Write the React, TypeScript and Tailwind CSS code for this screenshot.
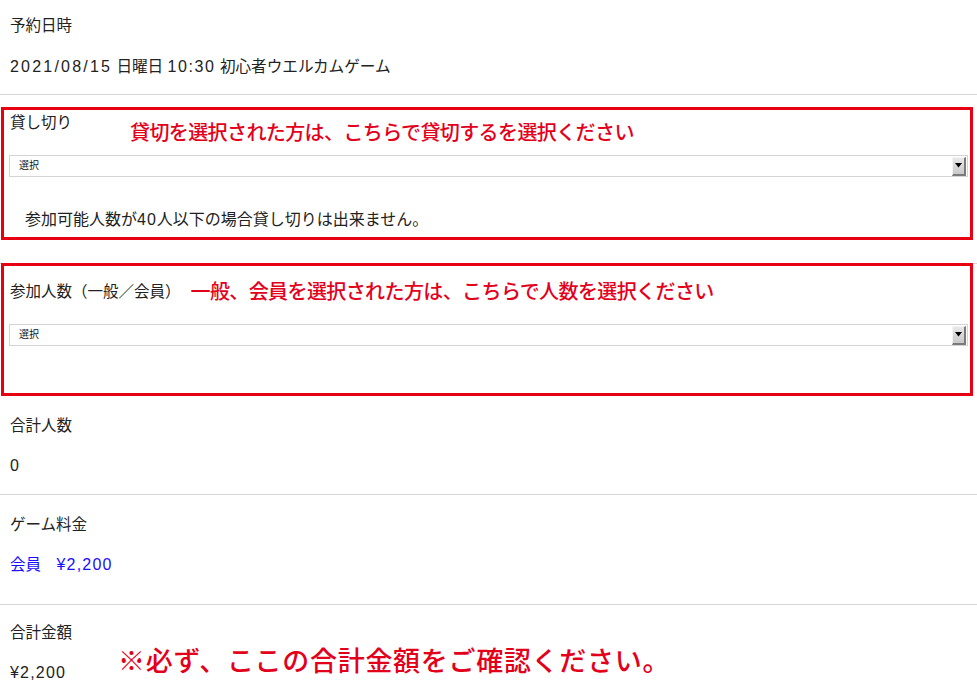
const FONT = "font-['Liberation_Sans','Noto_Sans_CJK_JP',sans-serif]";

function FakeSelect() {
  return (
    <div className="ml-[5px] w-[959px] h-[22px] border border-[#d4d4d4] bg-white flex items-center justify-between">
      <span className="pl-[9px] text-[10px] leading-[12px] text-[#111]">選択</span>
      <div className="h-[19px] w-[14px] mr-[1px] flex items-center justify-center border-t border-l border-[#f4f4f4] border-r-2 border-b-2 border-r-[#7a7a7a] border-b-[#7a7a7a] bg-gradient-to-b from-[#e8e8e8] to-[#c9c9c9]">
        <svg width="7" height="5" viewBox="0 0 7 5">
          <path d="M0 0h7L3.5 4.5z" fill="#000" />
        </svg>
      </div>
    </div>
  );
}

export default function App() {
  return (
    <div className={`${FONT} w-[977px] h-[699px] overflow-hidden bg-white text-[#222]`}>
      {/* 予約日時 */}
      <section className="pt-[16px] pb-[16px] border-b border-[#d6d6d6] pl-[10px]">
        <div className="h-[20px] leading-[20px] text-[15.5px]">予約日時</div>
        <div className="mt-[20px] h-[22px] leading-[22px] text-[15.6px]">
          <span className="text-[16px] tracking-[2.2px]">2021/08/15</span> 日曜日{" "}
          <span className="text-[16px] tracking-[1.6px]">10:30</span> 初心者ウエルカムゲーム
        </div>
      </section>

      {/* 貸し切り */}
      <section className="mt-[12px] ml-[1px] w-[972px] h-[133px] border-[3px] border-[#e60012]">
        <div className="flex items-start pl-[6px]">
          <div className="w-[120px] pt-[3px] h-[23px] leading-[20px] text-[15.5px]">貸し切り</div>
          <div className="mt-[9px] h-[28px] leading-[28px] text-[20px] font-medium text-[#e3001b] tracking-[-0.6px]">
            貸切を選択された方は、こちらで貸切するを選択ください
          </div>
        </div>
        <div className="mt-[8px]">
          <FakeSelect />
        </div>
        <div className="mt-[32px] pl-[21px] h-[22px] leading-[22px] text-[16px]">
          参加可能人数が<span className="tracking-[1px]">40</span>人以下の場合貸し切りは出来ません。
        </div>
      </section>

      {/* 参加人数 */}
      <div className="mt-[23px] border-t border-[#d6d6d6]" />
      <section className="-mt-[1px] ml-[1px] w-[972px] h-[133px] border-[3px] border-[#e60012]">
        <div className="pt-[12px] pl-[6px] flex items-center h-[40px]">
          <span className="leading-[20px] text-[15.5px]">参加人数（一般／会員）</span>
          <span className="ml-[10px] leading-[28px] text-[20px] font-medium text-[#e3001b] tracking-[-0.6px]">
            一般、会員を選択された方は、こちらで人数を選択ください
          </span>
        </div>
        <div className="mt-[18px]">
          <FakeSelect />
        </div>
      </section>

      {/* 合計人数 */}
      <section className="pt-[20px] pb-[17px] border-b border-[#d6d6d6] pl-[10px]">
        <div className="h-[20px] leading-[20px] text-[15.5px]">合計人数</div>
        <div className="mt-[19px] h-[22px] leading-[22px] text-[16px]">0</div>
      </section>

      {/* ゲーム料金 */}
      <section className="pt-[20px] pb-[28px] border-b border-[#d6d6d6] pl-[10px]">
        <div className="h-[20px] leading-[20px] text-[15.5px]">ゲーム料金</div>
        <div className="mt-[19px] h-[22px] leading-[22px] text-[15.5px] text-[#1a0dff]">
          会員　<span className="text-[16px] tracking-[1.2px]">¥2,200</span>
        </div>
      </section>

      {/* 合計金額 */}
      <section className="pt-[18px] pl-[10px] flex items-start">
        <div className="w-[108px]">
          <div className="h-[20px] leading-[20px] text-[15.5px]">合計金額</div>
          <div className="mt-[19px] h-[22px] leading-[22px] text-[16px] tracking-[1.2px]">¥2,200</div>
        </div>
        <div className="mt-[21px] h-[36px] leading-[36px] text-[27px] font-medium text-[#e3001b] tracking-[0.7px]">
          ※必ず、ここの合計金額をご確認ください。
        </div>
      </section>
    </div>
  );
}
